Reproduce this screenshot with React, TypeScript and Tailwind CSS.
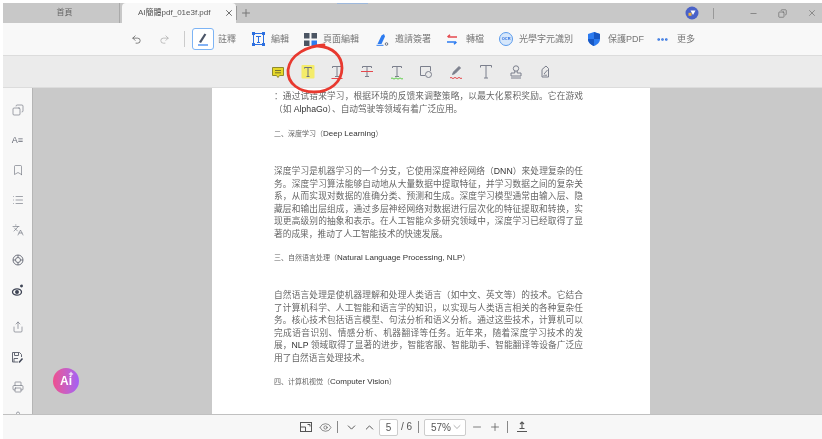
import React from 'react';
import { ChevronDown, ChevronUp, Copy, Eye, Minus, MoreHorizontal, Plus, Printer, Redo2, Share, Undo2, X, Bookmark, List, Languages, Stamp } from 'lucide-react';

const SANS = 'font-["Liberation_Sans","Noto_Sans_CJK_SC",sans-serif]';

const AnnotIcon = ({ children }: { children: React.ReactNode }) => (
  <svg width="18" height="18" viewBox="0 0 18 18" fill="none" strokeWidth="1" stroke="#7b7f8c">{children}</svg>
);

const tStem = <path d="M4.500 5V3.500h9V5M9 3.500v10M7 13.500h4" />;

const subTools = [
  <AnnotIcon key="note">
    <path d="M3.500 4.500h11v8h-4L9 14.500 7.500 12.500h-4z" fill="#e6d829" stroke="#8f8a2c" />
    <path d="M6 7.500h6M6 9.800h6" stroke="#77742c" />
  </AnnotIcon>,
  <AnnotIcon key="highlight">
    <rect x="2.500" y="2" width="13" height="13.500" rx="1" fill="#f4ec6a" stroke="none" />
    <path d="M5.500 5.500V4.500h7v1M9 4.500v9M7.500 13.500h3" stroke="#6b7080" />
  </AnnotIcon>,
  <AnnotIcon key="underline">
    {tStem}
    <path d="M3.500 15.500h11" stroke="#e5484d" />
  </AnnotIcon>,
  <AnnotIcon key="strike">
    {tStem}
    <path d="M3 8.500h12" stroke="#e5484d" />
  </AnnotIcon>,
  <AnnotIcon key="squiggle">
    {tStem}
    <path d="M3 15.500q1-1.200 2 0t2 0 2 0 2 0 2 0 2 0" stroke="#5fd04a" />
  </AnnotIcon>,
  <AnnotIcon key="shape">
    <path d="M8 12.500H3.500v-9h10V8" />
    <circle cx="11.500" cy="11.500" r="3" />
  </AnnotIcon>,
  <AnnotIcon key="pencil">
    <path d="M5.500 11.500l1-2.500 5.500-5.500 1.500 1.500L8 10.500z" fill="#7b7f8c" />
    <path d="M3 15q1-1.200 2 0t2 0 2 0 2 0 2 0 2 0" stroke="#e5484d" />
  </AnnotIcon>,
  <AnnotIcon key="text">
    <path d="M3.500 4.500V2.500h11v2M9 2.500v12.500M7 15h4" />
  </AnnotIcon>,
  <AnnotIcon key="stamp">
    <circle cx="9" cy="5.500" r="2.700" />
    <path d="M7.800 8v2H4v3h10v-3h-3.800V8M4 15h10" />
  </AnnotIcon>,
  <AnnotIcon key="sign">
    <path d="M6 6.500l4-3.500 2.500 2.500v8.500H6z" />
    <path d="M8 11l3.500-4M7.500 12.500c1.500-1 2 .5 3.500-.5" />
  </AnnotIcon>,
];

const MainTool = ({ icon, label, ml }: { icon: React.ReactNode; label: string; ml: string }) => (
  <div className={`flex items-center ${ml}`}>
    {icon}
    <span className="ml-[6px] text-[9px] leading-none text-[#777] whitespace-nowrap">{label}</span>
  </div>
);

const SideIcon = ({ children, mt = 'mt-[14px]' }: { children: React.ReactNode; mt?: string }) => (
  <div className={`flex h-4 w-full shrink-0 items-center justify-center text-[#656975] ${mt}`}>{children}</div>
);

const L = ({ children }: { children: React.ReactNode }) => <span className="text-[#333]">{children}</span>;

const Para = ({ lines }: { lines: React.ReactNode[] }) => (
  <div className="text-[8.700px] leading-[12.500px] text-[#666]">
    {lines.map((l, i) => (
      <div key={i} className={`whitespace-nowrap ${i < lines.length - 1 ? '[text-align-last:justify]' : ''}`}>{l}</div>
    ))}
  </div>
);

const Heading = ({ cjk, latin, mt }: { cjk: string; latin: string; mt: string }) => (
  <div className={`text-[7px] leading-[10px] text-[#666] whitespace-nowrap ${mt}`}>
    {cjk}（<span className="text-[8px] text-[#333]">{latin}</span>）
  </div>
);

export default function App() {
  return (
    <div className={`relative flex h-[439px] w-[822px] flex-col overflow-hidden bg-white pt-[3px] pl-[3px] blur-[0.5px] ${SANS}`}>
      <div className="absolute left-[337px] top-[3px] h-px w-[31px] bg-[#9db8dc]" />

      {/* tabs */}
      <div className="flex h-[20px] shrink-0 items-stretch bg-[#c8c8c8]">
        <div className="flex w-[117px] items-center justify-center border-r border-[#aaa] pl-[7px] text-[8px] text-[#666]">首頁</div>
        <div className="ml-[2px] flex w-[114px] items-center rounded-t-[4px] bg-[#f8f8f8] pl-[16px] text-[8px] text-[#555]">
          <span className="whitespace-nowrap">AI簡體pdf_01e3f.pdf</span>
          <X className="ml-[13px] shrink-0" size={10} color="#555" />
        </div>
        <div className="my-[3px] w-px bg-[#999]" />
        <Plus className="ml-[3px] self-center" size={12} color="#777" />
        <div className="flex-1" />
        <div className="flex items-center">
          <svg width="14" height="14" viewBox="0 0 14 14">
            <circle cx="7" cy="7" r="6.500" fill="#4a62c8" />
            <path d="M5.500 4.500h5L8 9z" fill="#fff" />
            <rect x="3.500" y="6.800" width="3" height="3" fill="#f0b43c" />
          </svg>
          <div className="ml-[14px] h-[11px] w-px bg-[#999]" />
          <Minus className="ml-[35px]" size={9} color="#555" strokeWidth={1.5} />
          <Copy className="ml-[20px] -scale-x-100" size={9} color="#555" strokeWidth={1.5} />
          <X className="ml-[20px] mr-[5px]" size={10} color="#555" strokeWidth={1.3} />
        </div>
      </div>

      {/* main toolbar */}
      <div className="flex h-[32px] shrink-0 items-center bg-[#f8f8f8] pl-[128px]">
        <Undo2 size={11} color="#555" strokeWidth={1.6} />
        <Redo2 className="ml-[17px]" size={11} color="#aaa" strokeWidth={1.6} />
        <div className="ml-[14px] h-[16px] w-px bg-[#ccc]" />
        <div className="ml-[7px] flex h-[22px] w-[22px] items-center justify-center rounded-[3px] border border-[#7db4f5] bg-white">
          <svg width="16" height="16" viewBox="0 0 16 16">
            <path d="M4 11L9.500 2.500l1.800 1L6 12z" fill="#4b5568" />
            <path d="M3 14h10" stroke="#3f87ee" strokeWidth="1.300" />
          </svg>
        </div>
        <MainTool ml="-ml-[2px]" label="註釋" icon={<span />} />
        <MainTool
          ml="ml-[16px]"
          label="編輯"
          icon={
            <svg width="13" height="14" viewBox="0 0 13 14" fill="none">
              <rect x="1.500" y="1.500" width="10" height="11" stroke="#2c6fe0" />
              <path d="M4 4.500h5M6.500 4.500v6M5 10.500h3" stroke="#2c6fe0" />
              <path d="M0 0h3v3H0zM10 0h3v3h-3zM0 11h3v3H0zM10 11h3v3h-3z" fill="#2c6fe0" />
            </svg>
          }
        />
        <MainTool
          ml="ml-[15px]"
          label="頁面編輯"
          icon={
            <svg width="13" height="13" viewBox="0 0 13 13">
              <rect width="5.500" height="5.500" fill="#4b5563" />
              <rect x="7.500" width="5.500" height="5.500" fill="#4b5563" />
              <rect y="7.500" width="5.500" height="5.500" fill="#4b5563" />
              <rect x="7.500" y="7.500" width="5.500" height="5.500" fill="#2c7bf0" />
            </svg>
          }
        />
        <MainTool
          ml="ml-[17px]"
          label="邀請簽署"
          icon={
            <svg width="13" height="13" viewBox="0 0 13 13">
              <path d="M1.500 11L5.500 2.500 8 1l1 2.500-3.500 7.500z" fill="#2c7bf0" />
              <path d="M0.500 12.300h7" stroke="#2c7bf0" />
              <circle cx="10.500" cy="11" r="1.300" fill="none" stroke="#6b7280" />
            </svg>
          }
        />
        <MainTool
          ml="ml-[15px]"
          label="轉檔"
          icon={
            <svg className="mr-[2px]" width="12" height="11" viewBox="0 0 12 11" fill="none" strokeWidth="1.500">
              <path d="M11 3H2M4 .7L1.500 3" stroke="#e5484d" />
              <path d="M1 8h9M8 10.300L10.500 8" stroke="#2c7bf0" />
            </svg>
          }
        />
        <MainTool
          ml="ml-[15px]"
          label="光學字元識別"
          icon={
            <div className="flex h-[14px] w-[14px] items-center justify-center rounded-full border border-[#5b9bec] bg-[#d6e7fb] text-[4px] font-bold text-[#2c6fe0]">OCR</div>
          }
        />
        <MainTool
          ml="ml-[15px]"
          label="保護PDF"
          icon={
            <svg className="mr-[2px]" width="12" height="14" viewBox="0 0 12 14">
              <path d="M6 0l6 2v5c0 3.500-2.500 5.500-6 7-3.500-1.500-6-3.500-6-7V2z" fill="#2c7bf0" />
              <path d="M6 0l6 2v5H6zM0 7h6v7C2.500 12.500 0 10.500 0 7z" fill="#1858c4" />
            </svg>
          }
        />
        <MainTool
          ml="ml-[12px]"
          label="更多"
          icon={<MoreHorizontal className="mr-[2px]" size={13} color="#2c6fe0" strokeWidth={3} />}
        />
      </div>

      {/* annotation toolbar */}
      <div className="flex h-[33px] shrink-0 items-center border-y border-[#dcdcdc] bg-[#ebebeb] pl-[266px] pt-[1px]">
        <div className="flex gap-[11.700px]">{subTools}</div>
      </div>

      {/* body */}
      <div className="flex min-h-0 flex-1">
        <div className="flex w-[30px] shrink-0 flex-col overflow-hidden border-r border-[#b5b5b5] bg-[#f7f7f7] pt-[14px]">
          <SideIcon mt="mt-0"><Copy className="-scale-x-100" size={12} strokeWidth={1.2} /></SideIcon>
          <SideIcon>
            <span className="text-[9px] leading-none">A≡</span>
          </SideIcon>
          <SideIcon><Bookmark size={12} strokeWidth={1.2} /></SideIcon>
          <SideIcon><List size={12} strokeWidth={1.2} /></SideIcon>
          <SideIcon><Languages size={12} strokeWidth={1.2} /></SideIcon>
          <SideIcon>
            <svg width="12" height="12" viewBox="0 0 12 12" fill="none" stroke="#656975" strokeWidth="0.900">
              <circle cx="6" cy="6" r="5" />
              <circle cx="6" cy="6" r="2.500" />
              <path d="M1 6h2.500M8.500 6H11M6 1v2.500M6 8.500V11" />
            </svg>
          </SideIcon>
          <SideIcon>
            <svg width="13" height="13" viewBox="0 0 13 13" fill="none" stroke="#3f4555" strokeWidth="1.300">
              <ellipse cx="6" cy="8" rx="4.500" ry="3.200" />
              <circle cx="6" cy="8" r="1.300" fill="#3f4555" />
              <circle cx="10.500" cy="2" r="0.800" fill="#3f4555" />
            </svg>
          </SideIcon>
          <SideIcon mt="mt-[21px]"><Share size={12} strokeWidth={1.2} /></SideIcon>
          <SideIcon>
            <svg width="13" height="13" viewBox="0 0 13 13" fill="none" stroke="#656975" strokeWidth="1">
              <path d="M7 11H1.500V1.500h7l2 2V6" />
              <path d="M3.500 1.500v3h4v-3M3 11V7.500h4" />
              <path d="M8 11.500l3.500-4" strokeWidth="1.500" stroke="#3f4555" />
            </svg>
          </SideIcon>
          <SideIcon><Printer size={12} strokeWidth={1.2} /></SideIcon>
          <SideIcon><Stamp size={12} strokeWidth={1.2} /></SideIcon>
        </div>

        <div className="flex min-w-0 flex-1 justify-center overflow-hidden bg-[#c9c9c9] pl-[7px]">
          <div className="h-full w-[438px] shrink-0 overflow-hidden bg-white pl-[62px] pr-[67px] pt-[2px]">
            <Para
              lines={[
                '：通过试错来学习，根据环境的反馈来调整策略，以最大化累积奖励。它在游戏',
                <>（如 <L>AlphaGo</L>）、自动驾驶等领域有着广泛应用。</>,
              ]}
            />
            <Heading mt="mt-[14px]" cjk="二、深度学习" latin="Deep Learning" />
            <div className="mt-[26px]">
              <Para
                lines={[
                  <>深度学习是机器学习的一个分支，它使用深度神经网络（<L>DNN</L>）来处理复杂的任</>,
                  '务。深度学习算法能够自动地从大量数据中提取特征，并学习数据之间的复杂关',
                  '系，从而实现对数据的准确分类、预测和生成。深度学习模型通常由输入层、隐',
                  '藏层和输出层组成，通过多层神经网络对数据进行层次化的特征提取和转换，实',
                  '现更高级别的抽象和表示。在人工智能众多研究领域中，深度学习已经取得了显',
                  '著的成果，推动了人工智能技术的快速发展。',
                ]}
              />
            </div>
            <Heading mt="mt-[13px]" cjk="三、自然语言处理" latin="Natural Language Processing, NLP" />
            <div className="mt-[26px]">
              <Para
                lines={[
                  '自然语言处理是使机器理解和处理人类语言（如中文、英文等）的技术。它结合',
                  '了计算机科学、人工智能和语言学的知识，以实现与人类语言相关的各种复杂任',
                  '务。核心技术包括语言模型、句法分析和语义分析。通过这些技术，计算机可以',
                  '完成语音识别、情感分析、机器翻译等任务。近年来，随着深度学习技术的发',
                  <>展，<L>NLP</L> 领域取得了显著的进步，智能客服、智能助手、智能翻译等设备广泛应</>,
                  '用了自然语言处理技术。',
                ]}
              />
            </div>
            <Heading mt="mt-[13px]" cjk="四、计算机视觉" latin="Computer Vision" />
          </div>
        </div>
      </div>

      {/* bottom bar */}
      <div className="flex h-[25px] shrink-0 items-center border-t border-[#c0c0c0] bg-[#f7f7f7] pl-[297px] text-[#555]">
        <svg width="12" height="10" viewBox="0 0 12 10" fill="none" stroke="#555" strokeWidth="1">
          <rect x="0.500" y="0.500" width="11" height="9" />
          <path d="M0.500 5H5.500V9.500M7.500 2.500h2.500v2" />
        </svg>
        <Eye className="ml-[7px]" size={13} strokeWidth={1.2} />
        <div className="ml-[5px] h-[12px] w-px bg-[#888]" />
        <ChevronDown className="ml-[7px]" size={13} strokeWidth={1.8} />
        <ChevronUp className="ml-[5px]" size={13} strokeWidth={1.8} />
        <div className="ml-[3px] flex h-[17px] w-[19px] items-center justify-center rounded-[2px] border border-[#ccc] bg-white text-[10px]">5</div>
        <span className="ml-[3px] w-[12px] text-[10px] leading-none">/ 6</span>
        <div className="ml-[5px] h-[12px] w-px bg-[#888]" />
        <div className="ml-[5px] flex h-[17px] w-[42px] items-center justify-between rounded-[2px] border border-[#ccc] bg-white pl-[6px] pr-[2px] text-[10px]">
          57%
          <ChevronDown size={12} color="#888" strokeWidth={1.3} />
        </div>
        <Minus className="ml-[5px]" size={12} strokeWidth={1.5} />
        <Plus className="ml-[6px]" size={12} strokeWidth={1.5} />
        <div className="ml-[6px] h-[12px] w-px bg-[#888]" />
        <svg className="ml-[8px]" width="12" height="12" viewBox="0 0 12 12" fill="none" stroke="#555" strokeWidth="1.100">
          <path d="M6 7V1M4 3l2-2 2 2M3.500 7.500h5M1 10.500h10" />
        </svg>
      </div>

      {/* AI button */}
      <div className="absolute left-[53px] top-[368px] flex h-[26px] w-[26px] items-center justify-center rounded-full bg-gradient-to-r from-[#ee4f8e] to-[#a35ff6] text-[12px] font-bold text-white">
        Ai
        <Plus className="absolute right-[5px] top-[3px]" size={6} strokeWidth={4} />
      </div>

      {/* hand drawn circle */}
      <svg className="absolute left-0 top-0 pointer-events-none" width="822" height="439" fill="none">
        <path
          d="M324 45C308 46 290 54 288 70C287 84 300 92 314 92C330 92 342 82 342 68C342 56 333 47 318 46"
          stroke="#e8392f"
          strokeWidth="2.800"
          strokeLinecap="round"
        />
      </svg>
    </div>
  );
}
